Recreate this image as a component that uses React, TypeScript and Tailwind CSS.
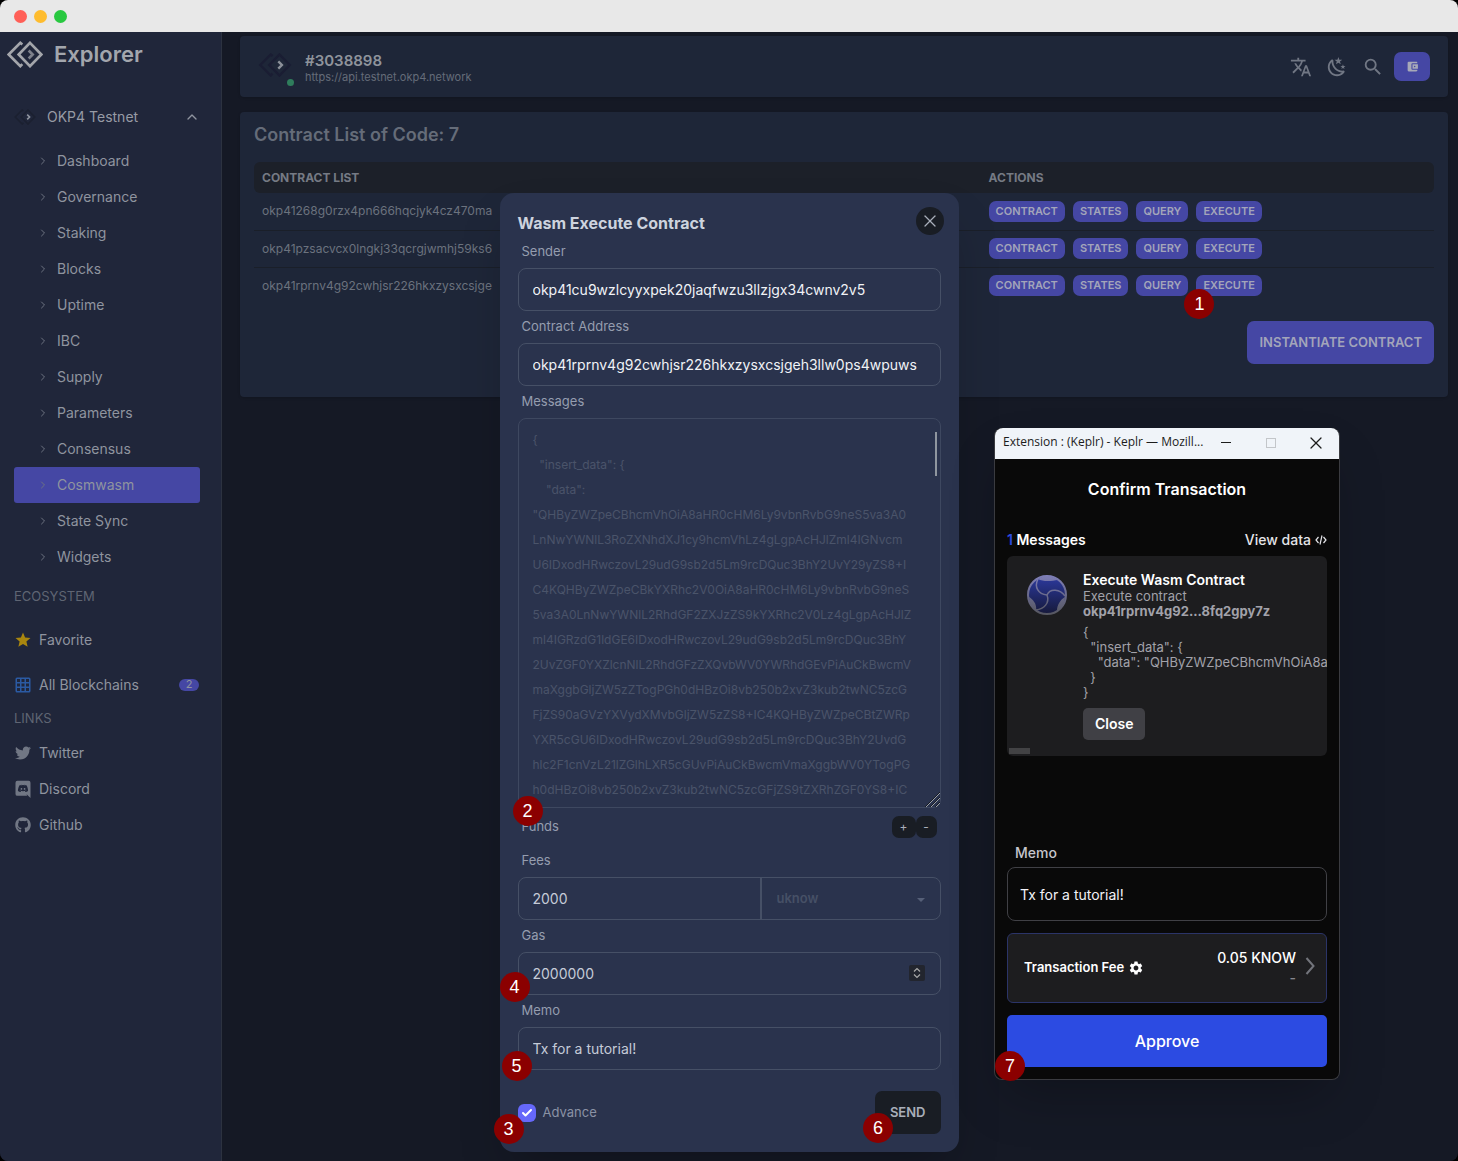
import React from "react";
import { FaGithub, FaTwitter } from "react-icons/fa";
import { MdAccountBalanceWallet, MdSearch, MdStar, MdTranslate, MdSettings } from "react-icons/md";
import { Check, ChevronRight, ChevronUp, X } from "lucide-react";

const NAV = [
  "Dashboard",
  "Governance",
  "Staking",
  "Blocks",
  "Uptime",
  "IBC",
  "Supply",
  "Parameters",
  "Consensus",
  "Cosmwasm",
  "State Sync",
  "Widgets",
];

const CONTRACTS = [
  "okp41268g0rzx4pn666hqcjyk4cz470ma",
  "okp41pzsacvcx0lngkj33qcrgjwmhj59ks6",
  "okp41rprnv4g92cwhjsr226hkxzysxcsjge",
];

const MESSAGE = `{
  "insert_data": {
    "data":
"QHByZWZpeCBhcmVhOiA8aHR0cHM6Ly9vbnRvbG9neS5va3A0
LnNwYWNlL3RoZXNhdXJ1cy9hcmVhLz4gLgpAcHJlZml4IGNvcm
U6IDxodHRwczovL29udG9sb2d5Lm9rcDQuc3BhY2UvY29yZS8+I
C4KQHByZWZpeCBkYXRhc2V0OiA8aHR0cHM6Ly9vbnRvbG9neS
5va3A0LnNwYWNlL2RhdGF2ZXJzZS9kYXRhc2V0Lz4gLgpAcHJlZ
ml4IGRzdG1ldGE6IDxodHRwczovL29udG9sb2d5Lm9rcDQuc3BhY
2UvZGF0YXZlcnNlL2RhdGFzZXQvbWV0YWRhdGEvPiAuCkBwcmV
maXggbGljZW5zZTogPGh0dHBzOi8vb250b2xvZ3kub2twNC5zcG
FjZS90aGVzYXVydXMvbGljZW5zZS8+IC4KQHByZWZpeCBtZWRp
YXR5cGU6IDxodHRwczovL29udG9sb2d5Lm9rcDQuc3BhY2UvdG
hlc2F1cnVzL21lZGlhLXR5cGUvPiAuCkBwcmVmaXggbWV0YTogPG
h0dHBzOi8vb250b2xvZ3kub2twNC5zcGFjZS9tZXRhZGF0YS8+IC`;

const TX_JSON = `{
  "insert_data": {
    "data": "QHByZWZpeCBhcmVhOiA8aHR
  }
}`;

function Logo({ frame, arrow, className }: { frame: string; arrow: string; className: string }) {
  return (
    <svg viewBox="0 0 108 80" fill="none" strokeWidth="8" className={className} aria-hidden="true">
      <path d="M46 10L40 5L5 40L40 75L46 69" stroke={frame} />
      <path d="M69 5L103 40L69 75L35 40Z" stroke={frame} />
      <path d="M65 28L77 40L65 52" stroke={arrow} />
    </svg>
  );
}

function GridIcon() {
  return (
    <svg viewBox="0 0 24 24" className="size-[18px] fill-[#2b5aa3]" aria-hidden="true">
      <path d="M10,4V8H14V4H10M16,4V8H20V4H16M16,10V14H20V10H16M16,16V20H20V16H16M14,20V16H10V20H14M8,20V16H4V20H8M8,14V10H4V14H8M8,8V4H4V8H8M10,14H14V10H10V14M4,2H20A2,2 0 0,1 22,4V20A2,2 0 0,1 20,22H4C2.92,22 2,21.1 2,20V4A2,2 0 0,1 4,2Z" />
    </svg>
  );
}

function DiscordIcon() {
  return (
    <svg viewBox="0 0 24 24" className="size-[18px] fill-current" aria-hidden="true">
      <path d="M22,24L16.75,19L17.38,21H4.5A2.5,2.5 0 0,1 2,18.5V3.5A2.5,2.5 0 0,1 4.5,1H19.5A2.5,2.5 0 0,1 22,3.5V24M12,6.8C9.32,6.8 7.44,7.95 7.44,7.95C8.47,7.03 10.27,6.5 10.27,6.5L10.1,6.33C8.41,6.36 6.88,7.53 6.88,7.53C5.16,11.12 5.27,14.22 5.27,14.22C6.67,16.03 8.75,15.9 8.75,15.9L9.46,15C8.21,14.73 7.42,13.62 7.42,13.62C7.42,13.62 9.3,14.9 12,14.9C14.7,14.9 16.58,13.62 16.58,13.62C16.58,13.62 15.79,14.73 14.54,15L15.25,15.9C15.25,15.9 17.33,16.03 18.73,14.22C18.73,14.22 18.84,11.12 17.12,7.53C17.12,7.53 15.59,6.36 13.9,6.33L13.73,6.5C13.73,6.5 15.53,7.03 16.56,7.95C16.56,7.95 14.68,6.8 12,6.8M9.93,10.59C10.58,10.59 11.11,11.16 11.1,11.86C11.1,12.55 10.58,13.13 9.93,13.13C9.29,13.13 8.77,12.55 8.77,11.86C8.77,11.16 9.28,10.59 9.93,10.59M14.1,10.59C14.75,10.59 15.27,11.16 15.27,11.86C15.27,12.55 14.75,13.13 14.1,13.13C13.46,13.13 12.94,12.55 12.94,11.86C12.94,11.16 13.45,10.59 14.1,10.59Z" />
    </svg>
  );
}

function MoonIcon() {
  return (
    <svg viewBox="0 0 24 24" className="size-[22px] fill-current" aria-hidden="true">
      <path d="M17.75 4.09L15.22 6.03L16.13 9.09L13.5 7.28L10.87 9.09L11.78 6.03L9.25 4.09L12.44 4L13.5 1L14.56 4L17.75 4.09M21.25 11L19.61 12.25L20.2 14.23L18.5 13.06L16.8 14.23L17.39 12.25L15.75 11L17.81 10.95L18.5 9L19.19 10.95L21.25 11M18.97 15.95C19.8 15.87 20.69 17.05 20.16 17.8C19.84 18.25 19.5 18.67 19.08 19.07C15.17 23 8.84 23 4.94 19.07C1.03 15.17 1.03 8.83 4.94 4.93C5.34 4.53 5.76 4.17 6.21 3.85C6.96 3.32 8.14 4.21 8.06 5.04C7.79 7.9 8.75 10.87 10.95 13.06C13.14 15.26 16.1 16.22 18.97 15.95M17.33 17.97C14.5 17.81 11.7 16.64 9.53 14.5C7.36 12.31 6.2 9.5 6.04 6.68C3.23 9.82 3.34 14.64 6.35 17.66C9.37 20.67 14.19 20.78 17.33 17.97Z" />
    </svg>
  );
}

function ContractIcon() {
  return (
    <svg viewBox="0 0 40 40" className="size-10 shrink-0" fill="none" aria-hidden="true">
      <defs>
        <linearGradient id="disc" x1="0" y1="0" x2="0" y2="1">
          <stop offset="0" stopColor="#2c3aa0" />
          <stop offset="1" stopColor="#16193a" />
        </linearGradient>
        <linearGradient id="rim" gradientUnits="userSpaceOnUse" x1="0" y1="0" x2="0" y2="40">
          <stop offset="0" stopColor="#7f7fb8" />
          <stop offset="1" stopColor="#55565f" />
        </linearGradient>
      </defs>
      <circle cx="20" cy="20" r="19" fill="url(#disc)" />
      <path
        d="M11 4C16 7 25 6 31 5Q20 -2 11 4ZM2 22C7 25 10 30 9 35Q2 30 2 22ZM30 36C30 30 33 25 38 22Q38 31 30 36Z"
        fill="url(#rim)"
      />
      <circle cx="20" cy="20" r="19" stroke="url(#rim)" strokeWidth="2" />
      <g stroke="url(#rim)" strokeWidth="1.5">
        <path d="M11 4C7 12 11 19 20 20" />
        <path d="M38 21C33 14 23 13 20 20" />
        <path d="M20 20C23 28 17 34 9 35" />
      </g>
    </svg>
  );
}

function Marker({ n, className }: { n: number; className: string }) {
  return (
    <span
      className={`absolute z-10 flex size-[30px] items-center justify-center rounded-full bg-[#8b0000] font-['Liberation_Sans',sans-serif] text-lg font-normal text-white ${className}`}
    >
      {n}
    </span>
  );
}

function Sidebar() {
  return (
    <aside className="w-[222px] shrink-0 border-r border-[#2c3240] bg-[#20263a] text-[#8f949f]">
      <a href="#home" className="flex h-11 items-center gap-[11px] pl-[7px]">
        <Logo frame="#a3a5aa" arrow="#7d808a" className="h-[27px] w-9" />
        <span className="text-[22px] font-semibold text-[#a3a6ad]">Explorer</span>
      </a>
      <button type="button" className="mt-[23px] flex h-9 w-full items-center pl-[14px] pr-[21px] text-sm">
        <Logo frame="#1b2030" arrow="#8f949f" className="h-4 w-[22px]" />
        <span className="ml-[11px] flex-1 text-left text-[#979ba5]">OKP4 Testnet</span>
        <ChevronUp className="size-4" />
      </button>
      <nav aria-label="OKP4 Testnet" className="mt-2 pl-[14px] pr-[21px]">
        {NAV.map((item) => (
          <a
            key={item}
            href={`#${item}`}
            className={`flex h-9 items-center rounded-[3px] pl-[23px] text-sm ${item === "Cosmwasm" ? "bg-[#4547a4]" : ""}`}
          >
            <ChevronRight className="size-3 text-[#6d7381]" />
            <span className="ml-2">{item}</span>
          </a>
        ))}
      </nav>
      <h2 className="mt-[10px] h-[22px] pl-[14px] text-[13px] leading-[22px] text-[#5f6573]">ECOSYSTEM</h2>
      <a href="#favorite" className="mt-[15px] flex h-9 items-center gap-[7px] pl-[14px] text-sm">
        <MdStar className="size-[18px] text-[#a8860f]" />
        Favorite
      </a>
      <a href="#blockchains" className="mt-[9px] flex h-9 items-center gap-[7px] pl-[14px] pr-[22px] text-sm">
        <GridIcon />
        <span className="flex-1">All Blockchains</span>
        <span className="flex h-3 w-5 items-center justify-center rounded-full bg-[#4547a4] text-[11px]">2</span>
      </a>
      <h2 className="mt-1 h-[22px] pl-[14px] text-[13px] leading-[22px] text-[#5f6573]">LINKS</h2>
      <a href="#twitter" className="mt-[6px] flex h-9 items-center gap-[7px] pl-[14px] text-sm">
        <FaTwitter className="size-[18px] p-px text-[#717784]" />
        Twitter
      </a>
      <a href="#discord" className="flex h-9 items-center gap-[7px] pl-[14px] text-sm">
        <span className="text-[#717784]">
          <DiscordIcon />
        </span>
        Discord
      </a>
      <a href="#github" className="flex h-9 items-center gap-[7px] pl-[14px] text-sm">
        <FaGithub className="size-[18px] p-px text-[#717784]" />
        Github
      </a>
    </aside>
  );
}

function TopBar() {
  return (
    <header className="flex h-[61px] items-center rounded bg-[#1e2638] pl-[17px] pr-[18px] shadow">
      <div className="relative h-[35px] w-9">
        <Logo frame="#1a1d33" arrow="#8b9099" className="mt-1 h-6 w-9" />
        <span className="absolute -right-px -bottom-[2px] size-[7px] rounded-full bg-[#2f7d5c]" />
      </div>
      <div className="ml-3 flex-1 pt-[3px]">
        <div className="text-[15px] leading-[17px] font-semibold text-[#8f949c]">#3038898</div>
        <div className="text-[11px] leading-4 text-[#656c79]">https://api.testnet.okp4.network</div>
      </div>
      <div className="flex items-center gap-[14px] text-[#717784]">
        <button type="button" aria-label="Language">
          <MdTranslate className="size-[22px]" />
        </button>
        <button type="button" aria-label="Theme">
          <MoonIcon />
        </button>
        <button type="button" aria-label="Search">
          <MdSearch className="size-[22px]" />
        </button>
        <button
          type="button"
          aria-label="Wallet"
          className="-ml-1 flex h-[29px] w-9 items-center justify-center rounded-[7px] bg-[#4547a4] text-[#a7a9b8]"
        >
          <MdAccountBalanceWallet className="size-[13px]" />
        </button>
      </div>
    </header>
  );
}

function ContractList() {
  return (
    <section className="mt-[15px] rounded bg-[#1e2638] px-[14px] pt-[10px] pb-[33px] shadow">
      <h1 className="mb-[14px] text-lg leading-[26px] font-semibold text-[#656c79]">Contract List of Code: 7</h1>
      <table className="w-full table-fixed text-left text-xs text-[#6b727e]">
        <thead>
          <tr className="h-[31px] bg-[#1c2029] text-[#757a84]">
            <th className="w-[62%] rounded-l-md pl-2 font-bold">CONTRACT LIST</th>
            <th className="rounded-r-md pl-[3px] font-bold">ACTIONS</th>
          </tr>
        </thead>
        <tbody>
          {CONTRACTS.map((address, i) => (
            <tr key={address} className={i < 2 ? "h-[37px] border-b border-[#1a1f29]" : "h-[37px]"}>
              <td className="pl-2">{address}</td>
              <td className="pl-[3px]">
                <div className="flex gap-2">
                  {["CONTRACT", "STATES", "QUERY", "EXECUTE"].map((action) => (
                    <span key={action} className="relative">
                      <button
                        type="button"
                        className="block h-[21px] rounded-[7px] bg-[#4547a4] px-[7px] text-[11px] leading-[21px] font-semibold text-[#a3a5ba]"
                      >
                        {action}
                      </button>
                      {i === 2 && action === "EXECUTE" && <Marker n={1} className="-left-3 top-[14px]" />}
                    </span>
                  ))}
                </div>
              </td>
            </tr>
          ))}
        </tbody>
      </table>
      <div className="mt-[17px] flex justify-end">
        <button
          type="button"
          className="h-[43px] rounded-[7px] bg-[#4547a4] px-3 text-[13px] font-semibold text-[#a3a5ba]"
        >
          INSTANTIATE CONTRACT
        </button>
      </div>
    </section>
  );
}

const LABEL = "flex h-8 items-center pl-1 text-[13px] text-[#959daf]";
const FIELD = "block h-[43px] w-full rounded-lg border border-[#465066] bg-transparent px-[14px] text-sm outline-none";

function ExecuteDialog() {
  return (
    <form
      role="dialog"
      aria-label="Wasm Execute Contract"
      className="w-[459px] rounded-[14px] bg-[#2a334d] p-[18px] text-[#c5cbd8] shadow-2xl"
      onSubmit={(e) => e.preventDefault()}
    >
      <div className="flex h-[25px] items-start justify-between">
        <h2 className="text-base leading-6 font-bold text-[#cdd3de]">Wasm Execute Contract</h2>
        <button
          type="button"
          aria-label="Close dialog"
          className="-mt-1 -mr-[3px] flex size-7 items-center justify-center rounded-full bg-[#191d24] text-[#a9afba]"
        >
          <X className="size-5" strokeWidth={1.5} />
        </button>
      </div>

      <label htmlFor="sender" className={LABEL}>Sender</label>
      <input id="sender" className={`${FIELD} text-[#f0f2f6]`} defaultValue="okp41cu9wzlcyyxpek20jaqfwzu3llzjgx34cwnv2v5" />

      <label htmlFor="contract" className={LABEL}>Contract Address</label>
      <input id="contract" className={`${FIELD} text-[#f0f2f6]`} defaultValue="okp41rprnv4g92cwhjsr226hkxzysxcsjgeh3llw0ps4wpuws" />

      <label htmlFor="messages" className={LABEL}>Messages</label>
      <div className="relative">
        <textarea
          id="messages"
          readOnly
          wrap="off"
          value={MESSAGE}
          className="block h-[390px] w-full resize-none overflow-hidden rounded-lg border border-[#3e4860] bg-transparent px-[14px] py-2 text-xs leading-[25px] text-[#4a546a] outline-none"
        />
        <span className="absolute top-[14px] right-1 h-11 w-[2px] bg-[#8f969f]" />
        <svg viewBox="0 0 15 15" className="absolute right-px bottom-px size-[15px]" aria-hidden="true">
          <path d="M1 15L15 1M6 15L15 6M11 15L15 11" stroke="#9a9fa8" />
          <path d="M0 15L15 0M5 15L15 5M10 15L15 10" stroke="#161a22" />
        </svg>
        <Marker n={2} className="-left-[5px] -bottom-[18px]" />
      </div>

      <div className="flex h-[37px] items-center justify-between px-1 text-[13px] text-[#959daf]">
        <span>Funds</span>
        <span className="flex text-xs text-[#a9afba]">
          <button type="button" className="h-[22px] w-6 rounded-[7px] bg-[#191d24]">+</button>
          <button type="button" className="h-[22px] w-[21px] rounded-[7px] bg-[#191d24]">-</button>
        </span>
      </div>

      <label htmlFor="fees" className={LABEL}>Fees</label>
      <div className="flex h-[43px] rounded-lg border border-[#465066]">
        <input id="fees" className="min-w-0 flex-1 bg-transparent px-[14px] text-sm outline-none" defaultValue="2000" />
        <span className="relative w-[180px] border-l-2 border-[#465066]">
          <select
            aria-label="Fee denomination"
            className="size-full appearance-none bg-transparent px-[15px] text-[13px] font-semibold text-[#465066] outline-none"
          >
            <option>uknow</option>
          </select>
          <svg viewBox="0 0 8 4" className="pointer-events-none absolute top-5 right-[15px] h-1 w-2 fill-[#566078]" aria-hidden="true">
            <path d="M0 0H8L4 4Z" />
          </svg>
        </span>
      </div>

      <label htmlFor="gas" className={LABEL}>Gas</label>
      <div className="relative">
        <input id="gas" inputMode="numeric" className={FIELD} defaultValue="2000000" />
        <span className="absolute top-[13px] right-4 flex size-4 items-center justify-center rounded-xs bg-[#22252e]">
          <svg viewBox="0 0 8 12" className="h-3 w-2" fill="none" stroke="#a9a9a9" strokeWidth="1.2" aria-hidden="true">
            <path d="M1 4.500L4 1.500L7 4.500M1 7.500L4 10.500L7 7.500" />
          </svg>
        </span>
        <Marker n={4} className="-left-[18px] top-5" />
      </div>

      <label htmlFor="memo" className={LABEL}>Memo</label>
      <div className="relative">
        <input id="memo" className={FIELD} defaultValue="Tx for a tutorial!" />
        <Marker n={5} className="-left-4 top-6" />
      </div>

      <div className="mt-[21px] flex items-center justify-between">
        <label className="relative flex items-center text-[13px] text-[#8a92a5]">
          <input type="checkbox" defaultChecked className="peer size-[18px] appearance-none rounded-[6px] bg-[#6668fa]" />
          <Check className="pointer-events-none absolute left-[3px] size-3 text-white" strokeWidth={4} />
          <span className="ml-[7px]">Advance</span>
          <Marker n={3} className="-left-6 top-[11px]" />
        </label>
        <span className="relative">
          <button type="submit" className="h-[43px] rounded-[7px] bg-[#191d24] px-[15px] text-[13px] font-semibold text-[#a9afba]">
            SEND
          </button>
          <Marker n={6} className="-left-3 top-[22px]" />
        </span>
      </div>
    </form>
  );
}

function WalletWindow() {
  return (
    <section
      aria-label="Keplr"
      className="absolute top-[396px] left-[994px] w-[346px] rounded-lg border border-t-0 border-[#3a3b40] bg-[#090909] pb-3 text-white shadow-2xl"
    >
      <div className="flex h-[31px] items-center rounded-t-lg bg-[#f0f4f9] pl-2 text-[#1c1c1c]">
        <span className="min-w-0 flex-1 pb-1 font-['Open_Sans',sans-serif] text-xs whitespace-nowrap">
          Extension : (Keplr) - Keplr — Mozill...
        </span>
        <button type="button" aria-label="Minimize" className="flex h-full w-[45px] items-center justify-center pb-[2px]">
          <span className="h-px w-[10px] bg-[#1c1c1c]" />
        </button>
        <button type="button" aria-label="Maximize" className="flex h-full w-[45px] items-center justify-center pb-[2px]">
          <span className="size-[10px] border border-[#c3c6ca]" />
        </button>
        <button type="button" aria-label="Close window" className="flex h-full w-[46px] items-center justify-center pb-[2px]">
          <X className="size-5" strokeWidth={1.5} />
        </button>
      </div>
      <div className="px-3">
        <h2 className="pt-[19px] text-center text-base leading-[22px] font-semibold">Confirm Transaction</h2>
        <div className="mt-[29px] flex h-[22px] items-center justify-between text-sm">
          <h3 className="font-semibold">
            <span className="text-[#2d4be0]">1</span> Messages
          </h3>
          <button type="button" className="flex items-center gap-1 font-medium text-[#e4e4e8]">
            View data
            <svg viewBox="0 0 12 10" className="h-[10px] w-3" fill="none" stroke="currentColor" strokeWidth="1.2" aria-hidden="true">
              <path d="M3.500 2L1 5L3.500 8M8.500 2L11 5L8.500 8M7 0.500L5 9.500" />
            </svg>
          </button>
        </div>
        <div className="relative mt-[5px] flex h-[200px] gap-4 overflow-hidden rounded-md bg-[#1d1d1f] pt-[14px] pl-5">
          <div className="pt-[5px]">
            <ContractIcon />
          </div>
          <div>
            <h4 className="text-sm leading-[19px] font-semibold">Execute Wasm Contract</h4>
            <p className="text-[13px] leading-[15px] text-[#a2a2aa]">
              Execute contract
              <br />
              <b className="font-bold">okp41rprnv4g92...8fq2gpy7z</b>
            </p>
            <pre className="mt-[6px] font-['Inter',sans-serif] text-[13px] leading-[15px] text-[#a2a2aa]">{TX_JSON}</pre>
            <button type="button" className="mt-2 block h-8 rounded-[5px] bg-[#404045] px-3 text-sm font-semibold">
              Close
            </button>
          </div>
          <span className="absolute bottom-[2px] left-[2px] h-[6px] w-[21px] bg-[#424244]" />
        </div>
        <label htmlFor="tx-memo" className="mt-[83px] flex h-7 items-center pl-2 text-sm font-medium text-[#c6c6cd]">
          Memo
        </label>
        <input
          id="tx-memo"
          defaultValue="Tx for a tutorial!"
          className="block h-[54px] w-full rounded-lg border border-[#404045] bg-transparent px-3 text-sm text-[#f2f2f7] outline-none"
        />
        <button
          type="button"
          className="mt-3 flex h-[70px] w-full items-center rounded-md border border-[#2b3468] bg-[#1d1d1f] pl-4 pr-[11px] text-[13px] font-semibold"
        >
          Transaction Fee
          <MdSettings className="ml-1 size-4" />
          <span className="ml-auto flex flex-col items-end text-sm leading-5 font-medium">
            0.05 KNOW
            <span className="text-[#86868e]">-</span>
          </span>
          <svg viewBox="0 0 10 18" className="mb-1 ml-[9px] h-[18px] w-[10px]" fill="none" stroke="#72747b" strokeWidth="2" aria-hidden="true">
            <path d="M1.500 1L8.500 9L1.500 17" />
          </svg>
        </button>
        <div className="relative mt-3">
          <button type="button" className="h-[52px] w-full rounded-[5px] bg-[#2c4be2] text-base font-medium">
            Approve
          </button>
          <Marker n={7} className="-left-3 top-9" />
        </div>
      </div>
    </section>
  );
}

export default function App() {
  return (
    <div className="flex min-h-screen flex-col bg-black font-['Inter',sans-serif]">
      <div className="flex h-8 items-center gap-[7px] rounded-t-lg bg-[#e8e8e8] pl-[14px]">
        <span className="size-[13px] rounded-full bg-[#ff5f57]" />
        <span className="size-[13px] rounded-full bg-[#febc2e]" />
        <span className="size-[13px] rounded-full bg-[#28c840]" />
      </div>
      <div className="relative flex flex-1 overflow-hidden rounded-b-lg bg-[#151925]">
        <Sidebar />
        <main className="min-w-0 flex-1 pt-1 pr-[10px] pl-[18px]">
          <TopBar />
          <ContractList />
        </main>
        <div className="absolute inset-0 flex items-end justify-center pb-[9px]">
          <ExecuteDialog />
        </div>
        <WalletWindow />
      </div>
    </div>
  );
}
